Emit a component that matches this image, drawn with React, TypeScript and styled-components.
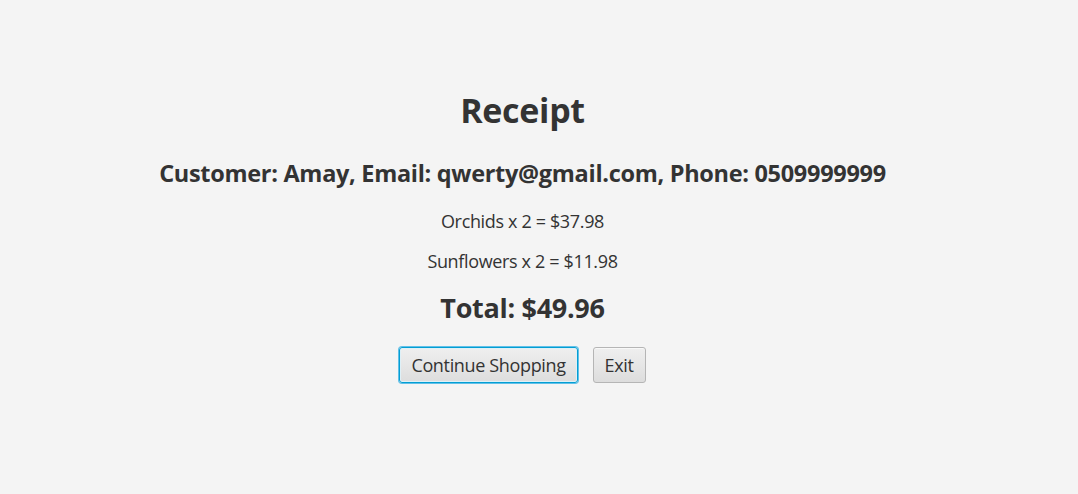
import React from "react";
import styled, { createGlobalStyle } from "styled-components";

const Global = createGlobalStyle`
  html, body { margin: 0; padding: 0; background: #f4f4f4; }
  body { font-family: "Open Sans", "Noto Sans", sans-serif; color: #333333; }
`;

const Page = styled.div`
  width: 1045px;
  height: 494px;
  display: flex;
  flex-direction: column;
  align-items: center;
  padding-top: 90px;
  box-sizing: border-box;
`;

const Title = styled.h1`
  margin: 0;
  font-size: 34px;
  font-weight: 700;
  line-height: 40px;
  letter-spacing: -0.3px;
`;

const Customer = styled.h2`
  margin: 28px 0 0;
  font-size: 23.5px;
  font-weight: 700;
  line-height: 30px;
  letter-spacing: -0.3px;
`;

const Item = styled.div<{ $gap: number }>`
  margin-top: ${(p) => p.$gap}px;
  font-size: 18px;
  line-height: 24px;
  letter-spacing: -0.35px;
`;

const Total = styled.div`
  margin: 18px 0 0;
  font-size: 27px;
  font-weight: 700;
  line-height: 34px;
  letter-spacing: -0.3px;
`;

const Buttons = styled.div`
  display: flex;
  gap: 15px;
  margin-top: 22px;
  align-items: center;
`;

const Button = styled.button<{ $focused?: boolean }>`
  font-family: inherit;
  font-size: 18px;
  color: #333333;
  height: 36px;
  padding: 0 11px;
  border-radius: 3px;
  border: 1px solid ${(p) => (p.$focused ? "#039ed3" : "#b5b5b5")};
  background: linear-gradient(#efefef, #dddddd);
  letter-spacing: -0.35px;
  line-height: 24px;
  cursor: pointer;
  box-shadow: ${(p) =>
    p.$focused
      ? "0 0 0 1px #61c0e8, inset 0 0 0 1px #def0f7"
      : "inset 0 1px 0 #f8f8f8"};
`;

export default function App() {
  return (
    <>
      <Global />
      <Page>
        <Title>Receipt</Title>
        <Customer>Customer: Amay, Email: qwerty@gmail.com, Phone: 0509999999</Customer>
        <Item $gap={21}>Orchids x 2 = $37.98</Item>
        <Item $gap={16}>Sunflowers x 2 = $11.98</Item>
        <Total>Total: $49.96</Total>
        <Buttons>
          <Button $focused>Continue Shopping</Button>
          <Button>Exit</Button>
        </Buttons>
      </Page>
    </>
  );
}
